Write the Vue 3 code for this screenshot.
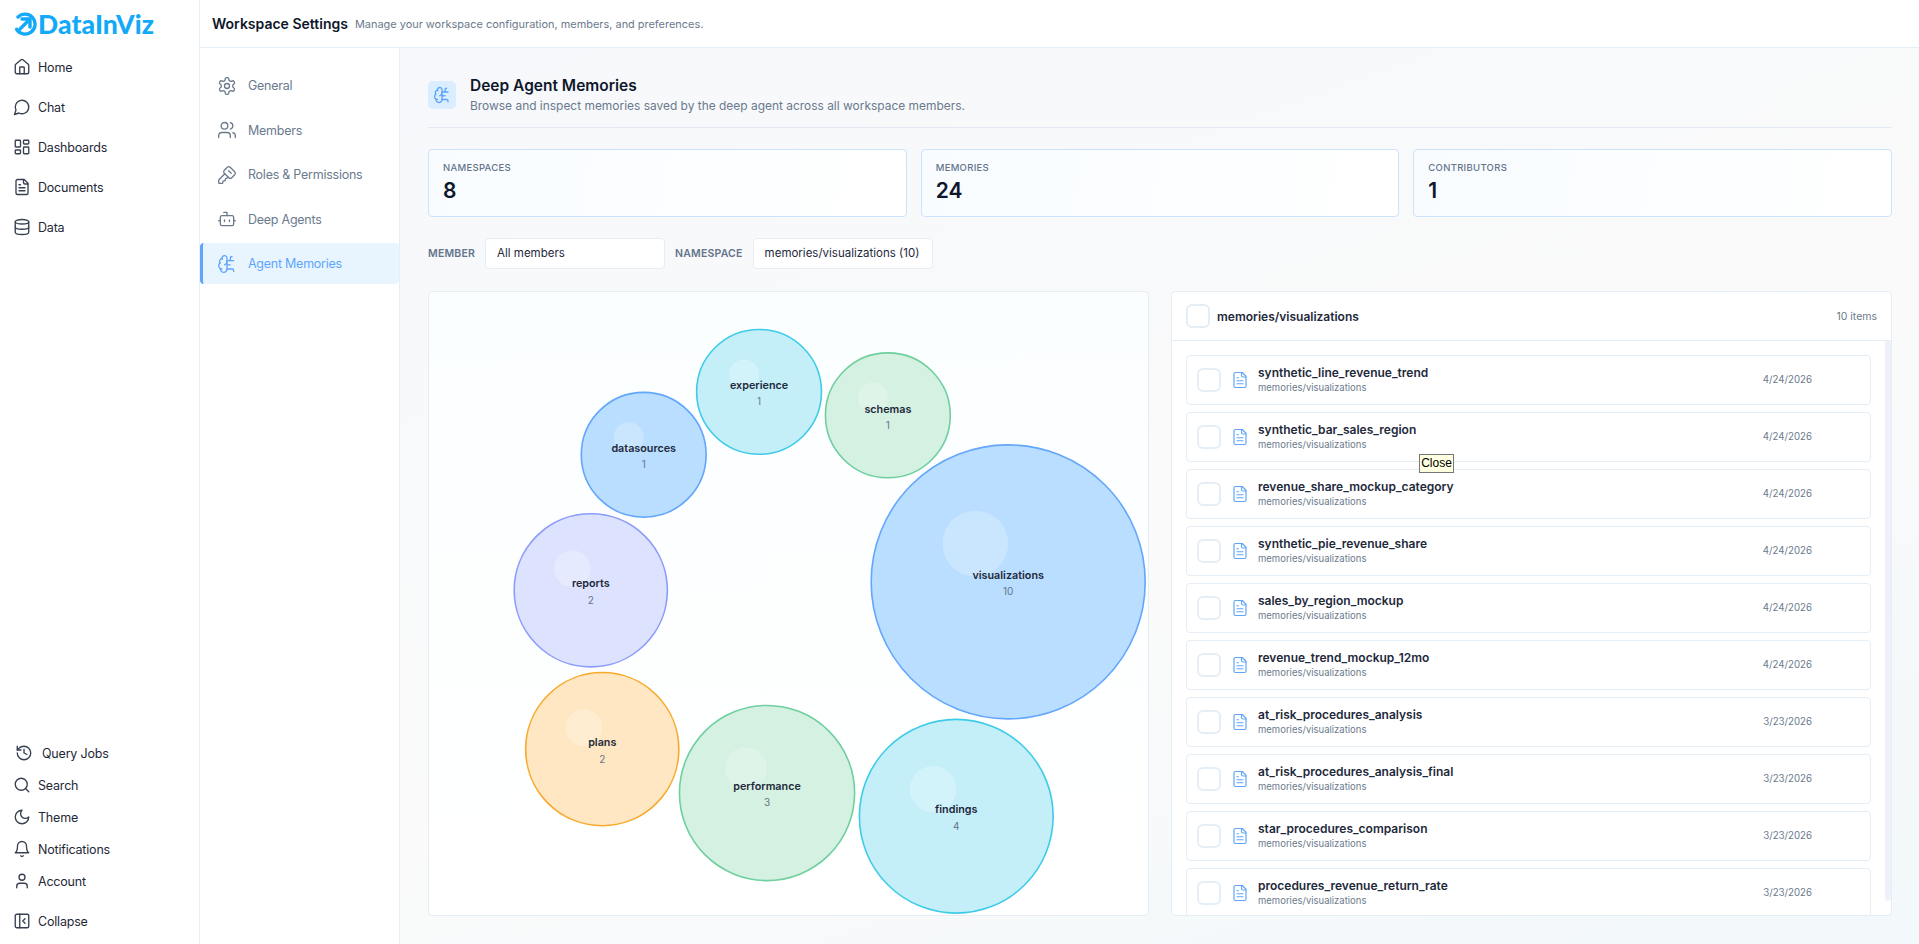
<script setup>
const icons = {
  home: '<path d="M15 21v-8a1 1 0 0 0-1-1h-4a1 1 0 0 0-1 1v8"/><path d="M3 10a2 2 0 0 1 .709-1.528l7-5.999a2 2 0 0 1 2.582 0l7 5.999A2 2 0 0 1 21 10v9a2 2 0 0 1-2 2H5a2 2 0 0 1-2-2z"/>',
  chat: '<path d="M7.9 20A9 9 0 1 0 4 16.1L2 22Z"/>',
  dashboards: '<rect x="3" y="3" width="7" height="9" rx="1"/><rect x="14" y="3" width="7" height="5" rx="1"/><rect x="14" y="12" width="7" height="9" rx="1"/><rect x="3" y="16" width="7" height="5" rx="1"/>',
  doc: '<path d="M15 2H6a2 2 0 0 0-2 2v16a2 2 0 0 0 2 2h12a2 2 0 0 0 2-2V7Z"/><path d="M14 2v4a2 2 0 0 0 2 2h4"/><path d="M10 9H8"/><path d="M16 13H8"/><path d="M16 17H8"/>',
  data: '<ellipse cx="12" cy="5" rx="9" ry="3"/><path d="M3 5V19A9 3 0 0 0 21 19V5"/><path d="M3 12A9 3 0 0 0 21 12"/>',
  history: '<path d="M3 12a9 9 0 1 0 9-9 9.75 9.75 0 0 0-6.74 2.74L3 8"/><path d="M3 3v5h5"/><path d="M12 7v5l4 2"/>',
  search: '<circle cx="11" cy="11" r="8"/><path d="m21 21-4.3-4.3"/>',
  moon: '<path d="M12 3a6 6 0 0 0 9 9 9 9 0 1 1-9-9Z"/>',
  bell: '<path d="M6 8a6 6 0 0 1 12 0c0 7 3 9 3 9H3s3-2 3-9"/><path d="M10.3 21a1.94 1.94 0 0 0 3.4 0"/>',
  user: '<path d="M19 21v-2a4 4 0 0 0-4-4H9a4 4 0 0 0-4 4v2"/><circle cx="12" cy="7" r="4"/>',
  collapse: '<rect x="3" y="3" width="18" height="18" rx="2"/><path d="M9 3v18"/><path d="m16 15-3-3 3-3"/>',
  settings: '<path d="M12.22 2h-.44a2 2 0 0 0-2 2v.18a2 2 0 0 1-1 1.73l-.43.25a2 2 0 0 1-2 0l-.15-.08a2 2 0 0 0-2.73.73l-.22.38a2 2 0 0 0 .73 2.73l.15.1a2 2 0 0 1 1 1.72v.51a2 2 0 0 1-1 1.74l-.15.09a2 2 0 0 0-.73 2.73l.22.38a2 2 0 0 0 2.73.73l.15-.08a2 2 0 0 1 2 0l.43.25a2 2 0 0 1 1 1.73V20a2 2 0 0 0 2 2h.44a2 2 0 0 0 2-2v-.18a2 2 0 0 1 1-1.73l.43-.25a2 2 0 0 1 2 0l.15.08a2 2 0 0 0 2.73-.73l.22-.39a2 2 0 0 0-.73-2.73l-.15-.08a2 2 0 0 1-1-1.74v-.5a2 2 0 0 1 1-1.74l.15-.09a2 2 0 0 0 .73-2.73l-.22-.38a2 2 0 0 0-2.73-.73l-.15.08a2 2 0 0 1-2 0l-.43-.25a2 2 0 0 1-1-1.73V4a2 2 0 0 0-2-2z"/><circle cx="12" cy="12" r="3"/>',
  users: '<path d="M16 21v-2a4 4 0 0 0-4-4H6a4 4 0 0 0-4 4v2"/><circle cx="9" cy="7" r="4"/><path d="M22 21v-2a4 4 0 0 0-3-3.87"/><path d="M16 3.13a4 4 0 0 1 0 7.75"/>',
  key: '<path d="M12.4 2.7a2.5 2.5 0 0 1 3.4 0l5.5 5.5a2.5 2.5 0 0 1 0 3.4l-3.7 3.7a2.5 2.5 0 0 1-3.4 0L8.7 9.8a2.5 2.5 0 0 1 0-3.4z"/><path d="m14 7 3 3"/><path d="m9.4 10.6-6.814 6.814A2 2 0 0 0 2 18.828V21a1 1 0 0 0 1 1h3a1 1 0 0 0 1-1v-1a1 1 0 0 1 1-1h1a1 1 0 0 0 1-1v-1a1 1 0 0 1 1-1h.172a2 2 0 0 0 1.414-.586l.814-.814"/>',
  bot: '<path d="M12 8V4H8"/><rect x="4" y="8" width="16" height="12" rx="2"/><path d="M2 14h2"/><path d="M20 14h2"/><path d="M15 13v2"/><path d="M9 13v2"/>',
  brain: '<path d="M12 5a3 3 0 1 0-5.997.125 4 4 0 0 0-2.526 5.77 4 4 0 0 0 .556 6.588A4 4 0 1 0 12 18Z"/><path d="M9 13a4.5 4.5 0 0 0 3-4"/><path d="M6.003 5.125A3 3 0 0 0 6.401 6.5"/><path d="M3.477 10.896a4 4 0 0 1 .585-.396"/><path d="M6 18a4 4 0 0 1-1.967-.516"/><path d="M12 13h4"/><path d="M12 18h6a2 2 0 0 1 2 2v1"/><path d="M12 8h8"/><path d="M16 8V5a2 2 0 0 1 2-2"/>',
}

const mainNav = [
  { label: 'Home', icon: 'home' },
  { label: 'Chat', icon: 'chat' },
  { label: 'Dashboards', icon: 'dashboards' },
  { label: 'Documents', icon: 'doc' },
  { label: 'Data', icon: 'data' },
]

const footNav = [
  { label: 'Search', icon: 'search' },
  { label: 'Theme', icon: 'moon' },
  { label: 'Notifications', icon: 'bell' },
  { label: 'Account', icon: 'user' },
]

const settingsNav = [
  { label: 'General', icon: 'settings' },
  { label: 'Members', icon: 'users' },
  { label: 'Roles & Permissions', icon: 'key' },
  { label: 'Deep Agents', icon: 'bot' },
  { label: 'Agent Memories', icon: 'brain', active: true },
]

const stats = [
  { label: 'NAMESPACES', value: 8 },
  { label: 'MEMORIES', value: 24 },
  { label: 'CONTRIBUTORS', value: 1 },
]

const blue = ['#b9deff', '#63a6fb']
const cyan = ['#c4eff9', '#3ecbe8']
const green = ['#d5f1e1', '#6fcf9f']
const bubbles = [
  { name: 'experience', count: 1, x: 331.5, y: 101, r: 62.5, c: cyan },
  { name: 'datasources', count: 1, x: 216, y: 164, r: 62.5, c: blue },
  { name: 'schemas', count: 1, x: 460.5, y: 124.5, r: 62.5, c: green },
  { name: 'reports', count: 2, x: 163, y: 299.7, r: 76.7, c: ['#dde3fe', '#8b9cfb'] },
  { name: 'visualizations', count: 10, x: 581, y: 291.3, r: 137.2, c: blue },
  { name: 'plans', count: 2, x: 174.5, y: 458.8, r: 76.7, c: ['#fee7c2', '#f8a92a'] },
  { name: 'performance', count: 3, x: 339.5, y: 502.7, r: 87.7, c: green },
  { name: 'findings', count: 4, x: 529, y: 526, r: 97, c: cyan },
]

const memories = [
  ['synthetic_line_revenue_trend', '4/24/2026'],
  ['synthetic_bar_sales_region', '4/24/2026'],
  ['revenue_share_mockup_category', '4/24/2026'],
  ['synthetic_pie_revenue_share', '4/24/2026'],
  ['sales_by_region_mockup', '4/24/2026'],
  ['revenue_trend_mockup_12mo', '4/24/2026'],
  ['at_risk_procedures_analysis', '3/23/2026'],
  ['at_risk_procedures_analysis_final', '3/23/2026'],
  ['star_procedures_comparison', '3/23/2026'],
  ['procedures_revenue_return_rate', '3/23/2026'],
]
</script>

<template>
  <div class="app">
    <aside class="sidebar">
      <div class="logo">
        <svg class="logo-mark" viewBox="0 0 24 24" fill="none" stroke="#12aaf8" stroke-width="3.4" stroke-linecap="round" stroke-linejoin="round">
          <path d="M5 5A10 10 0 1 1 3.6 17.4" />
          <path d="M7 17 16.5 7.5" />
          <path d="M9 7h8v8" />
        </svg>
        <span>DataInViz</span>
      </div>
      <nav class="side-nav">
        <a v-for="item in mainNav" :key="item.label" class="side-item">
          <svg class="icon" viewBox="0 0 24 24" v-html="icons[item.icon]"></svg>
          {{ item.label }}
        </a>
      </nav>
      <div class="side-foot">
        <a class="foot-item jobs">
          <svg class="icon" viewBox="0 0 24 24" v-html="icons.history"></svg>
          Query Jobs
        </a>
        <a v-for="item in footNav" :key="item.label" class="foot-item">
          <svg class="icon" viewBox="0 0 24 24" v-html="icons[item.icon]"></svg>
          {{ item.label }}
        </a>
        <a class="foot-item collapse">
          <svg class="icon" viewBox="0 0 24 24" v-html="icons.collapse"></svg>
          Collapse
        </a>
      </div>
    </aside>

    <div class="page">
      <header class="topbar">
        <h1>Workspace Settings</h1>
        <p>Manage your workspace configuration, members, and preferences.</p>
      </header>

      <div class="body">
        <nav class="settings-nav">
          <a
            v-for="item in settingsNav"
            :key="item.label"
            class="settings-item"
            :class="{ active: item.active }"
          >
            <svg class="icon" viewBox="0 0 24 24" v-html="icons[item.icon]"></svg>
            {{ item.label }}
          </a>
        </nav>

        <main class="content">
          <div class="title-row">
            <div class="title-icon">
              <svg class="icon" viewBox="0 0 24 24" v-html="icons.brain"></svg>
            </div>
            <div class="title-text">
              <h2>Deep Agent Memories</h2>
              <p>Browse and inspect memories saved by the deep agent across all workspace members.</p>
            </div>
          </div>

          <div class="stats">
            <div v-for="s in stats" :key="s.label" class="stat">
              <div class="stat-label">{{ s.label }}</div>
              <div class="stat-value">{{ s.value }}</div>
            </div>
          </div>

          <div class="filters">
            <label>MEMBER</label>
            <div class="select">All members</div>
            <label>NAMESPACE</label>
            <div class="select">memories/visualizations (10)</div>
          </div>

          <div class="panels">
            <section class="panel chart">
              <svg class="bubbles" viewBox="1 1 720 623" preserveAspectRatio="xMinYMin meet">
                <g v-for="b in bubbles" :key="b.name">
                  <circle :cx="b.x" :cy="b.y" :r="b.r" :fill="b.c[0]" :stroke="b.c[1]" stroke-width="1.6" />
                  <circle :cx="b.x - b.r * 0.24" :cy="b.y - b.r * 0.28" :r="b.r * 0.24" fill="#fff" fill-opacity="0.25" />
                  <text class="b-name" :x="b.x" :y="b.y - 2.8" text-anchor="middle">{{ b.name }}</text>
                  <text class="b-count" :x="b.x" :y="b.y + 13.4" text-anchor="middle">{{ b.count }}</text>
                </g>
              </svg>
            </section>

            <section class="panel list-panel">
              <div class="list-head">
                <span class="check"></span>
                <strong>memories/visualizations</strong>
                <em>10 items</em>
              </div>
              <div class="list">
                <div v-for="m in memories" :key="m[0]" class="row">
                  <span class="check"></span>
                  <svg class="icon doc" viewBox="0 0 24 24" v-html="icons.doc"></svg>
                  <div class="row-text">
                    <div class="row-name">{{ m[0] }}</div>
                    <div class="row-path">memories/visualizations</div>
                  </div>
                  <span class="row-date">{{ m[1] }}</span>
                </div>
                <div class="scrollbar"></div>
              </div>
            </section>
          </div>
        </main>
      </div>
    </div>

    <div class="tooltip">Close</div>
  </div>
</template>

<style>
html,
body {
  margin: 0;
  overflow: hidden;
}
</style>

<style scoped>
.app {
  position: relative;
  display: flex;
  width: 100%;
  height: 944px;
  overflow: hidden;
  background: #fff;
  color: #1e293b;
  font-family: Inter, "Noto Sans", sans-serif;
}

.icon {
  flex: none;
  width: 18px;
  height: 18px;
  fill: none;
  stroke: currentColor;
  stroke-width: 1.8;
  stroke-linecap: round;
  stroke-linejoin: round;
}

/* Sidebar */
.sidebar {
  flex: none;
  display: flex;
  flex-direction: column;
  box-sizing: border-box;
  width: 200px;
  border-right: 1px solid #e5edf5;
}

.logo {
  display: flex;
  align-items: center;
  height: 47px;
  padding-left: 13px;
  color: #12aaf8;
  font-family: Lato, sans-serif;
  font-size: 26.5px;
  font-weight: 900;
  letter-spacing: 0.1px;
}

.logo-mark {
  width: 24px;
  height: 24px;
  margin-right: 1px;
}

.side-nav {
  display: flex;
  flex-direction: column;
}

.side-item,
.foot-item {
  display: flex;
  align-items: center;
  gap: 7px;
  padding-left: 13px;
  font-size: 12.5px;
  letter-spacing: -0.2px;
  color: #1f2937;
}

.side-item .icon,
.foot-item .icon {
  color: #374151;
}

.side-item {
  height: 40px;
}

.side-foot {
  display: flex;
  flex-direction: column;
  margin-top: auto;
  padding-bottom: 7px;
}

.foot-item {
  height: 32px;
}

.foot-item.jobs {
  gap: 9px;
  padding-left: 15px;
}

.foot-item.collapse {
  margin-top: 8px;
}

/* Top bar */
.page {
  flex: 1;
  display: flex;
  flex-direction: column;
  min-width: 0;
}

.topbar {
  flex: none;
  display: flex;
  align-items: center;
  gap: 7px;
  box-sizing: border-box;
  height: 48px;
  padding-left: 12px;
  border-bottom: 1px solid #e5edf5;
}

.topbar h1 {
  margin: 0;
  font-size: 14px;
  font-weight: 600;
  color: #0f172a;
}

.topbar p {
  margin: 0;
  font-size: 10.95px;
  color: #6b7a8d;
}

.body {
  flex: 1;
  display: flex;
  min-height: 0;
}

/* Settings nav */
.settings-nav {
  flex: none;
  display: flex;
  flex-direction: column;
  gap: 3.5px;
  box-sizing: border-box;
  width: 200px;
  padding-top: 17px;
  border-right: 1px solid #e5edf5;
}

.settings-item {
  display: flex;
  align-items: center;
  gap: 11px;
  box-sizing: border-box;
  height: 41px;
  padding-left: 17px;
  font-size: 12.5px;
  letter-spacing: -0.25px;
  color: #6b7a8d;
}

.settings-item .icon {
  width: 20px;
  height: 20px;
  stroke-width: 1.6;
}

.settings-item.active {
  padding-left: 14px;
  border-left: 3px solid #60a5fa;
  border-radius: 4px;
  background: #e8f5ff;
  color: #60a5fa;
}

/* Content */
.content {
  flex: 1;
  min-width: 0;
  box-sizing: border-box;
  padding: 28px 27px 0 28px;
  background: linear-gradient(160deg, #f6f8fb 0%, #fafafa 55%, #f2f8fb 100%);
}

.title-row {
  display: flex;
  align-items: center;
  gap: 14px;
  box-sizing: border-box;
  height: 52px;
  padding-bottom: 17px;
  border-bottom: 1px solid #e3eaf3;
}

.title-icon {
  display: flex;
  align-items: center;
  justify-content: center;
  width: 28px;
  height: 28px;
  margin-top: 3px;
  border-radius: 5px;
  background: #dbeeff;
  color: #60a5fa;
}

.title-text {
  margin-top: 2px;
}

.title-row h2 {
  margin: 0 0 3px;
  font-size: 15.5px;
  line-height: 19px;
  font-weight: 600;
  color: #0f172a;
}

.title-row p {
  margin: 0;
  font-size: 11.95px;
  line-height: 15px;
  color: #6b7a8d;
}

.stats {
  display: grid;
  grid-template-columns: repeat(3, 1fr);
  gap: 14px;
  margin-top: 21px;
}

.stat {
  box-sizing: border-box;
  height: 68px;
  padding: 11px 14px;
  border: 1px solid #cfe2fb;
  border-radius: 4px;
  background: linear-gradient(100deg, #f8fcff, #fff);
}

.stat-label {
  font-size: 9.5px;
  line-height: 14px;
  font-weight: 500;
  letter-spacing: 0.3px;
  color: #64748b;
}

.stat-value {
  margin-top: 3px;
  font-size: 21px;
  line-height: 26px;
  font-weight: 600;
  color: #0f172a;
}

.filters {
  display: flex;
  align-items: center;
  margin-top: 21px;
  height: 31px;
}

.filters label {
  font-size: 10.5px;
  font-weight: 600;
  letter-spacing: 0.2px;
  color: #64748b;
}

.select {
  box-sizing: border-box;
  width: 180px;
  height: 31px;
  margin: 0 10px;
  padding-left: 11px;
  border: 1px solid #e5edf5;
  border-radius: 4px;
  background: #fff;
  font-size: 11.5px;
  line-height: 29px;
  color: #1e293b;
}

.panels {
  display: grid;
  grid-template-columns: 1fr 1fr;
  gap: 22px;
  height: 625px;
  margin-top: 22px;
}

.panel {
  position: relative;
  overflow: hidden;
  box-sizing: border-box;
  min-width: 0;
  border: 1px solid #e5edf5;
  border-radius: 4px;
  background: #fff;
}

.chart {
  background: linear-gradient(180deg, #fbfeff, #fff);
}

.bubbles {
  display: block;
  width: 100%;
  height: 100%;
}

.b-name {
  font-size: 10.8px;
  font-weight: 600;
  fill: #1e293b;
}

.b-count {
  font-size: 10px;
  fill: #64748b;
}

/* Memory list */
.list-head {
  display: flex;
  align-items: center;
  gap: 7px;
  box-sizing: border-box;
  height: 49px;
  padding: 0 14px;
  border-bottom: 1px solid #e5edf5;
}

.list-head strong {
  font-size: 12px;
  font-weight: 600;
  color: #1e293b;
}

.list-head em {
  margin-left: auto;
  font-size: 10.5px;
  font-style: normal;
  color: #6b7a8d;
}

.check {
  flex: none;
  box-sizing: border-box;
  width: 24px;
  height: 24px;
  border: 2px solid #e5edf5;
  border-radius: 6px;
  background: #fff;
}

.list {
  position: relative;
  display: flex;
  flex-direction: column;
  gap: 7px;
  padding: 14px 20px 0 14px;
}

.row {
  flex: none;
  display: flex;
  align-items: center;
  box-sizing: border-box;
  height: 50px;
  padding: 0 58px 0 10px;
  border: 1px solid #e5edf5;
  border-radius: 4px;
  background: #fff;
}

.row .doc {
  margin-left: 10px;
  color: #60a5fa;
  stroke-width: 1.6;
}

.row-text {
  flex: 1;
  min-width: 0;
  margin: -1px 0 0 9px;
}

.row-name {
  font-size: 12px;
  line-height: 16px;
  font-weight: 600;
  color: #1e293b;
}

.row-path {
  font-size: 9.5px;
  line-height: 13px;
  color: #6b7a8d;
}

.row-date {
  margin-top: -1px;
  font-size: 9.7px;
  color: #6b7a8d;
}

.scrollbar {
  position: absolute;
  top: 0;
  right: 0;
  width: 6px;
  height: 560px;
  border-radius: 0 0 3px 3px;
  background: #eef1f9;
}

/* Native title tooltip */
.tooltip {
  position: absolute;
  left: 1419px;
  top: 454px;
  box-sizing: border-box;
  width: 35px;
  height: 19px;
  border: 1px solid #767676;
  background: #ffffe1;
  font-family: "Liberation Sans", sans-serif;
  font-size: 12px;
  line-height: 17px;
  text-align: center;
  color: #000;
}
</style>
